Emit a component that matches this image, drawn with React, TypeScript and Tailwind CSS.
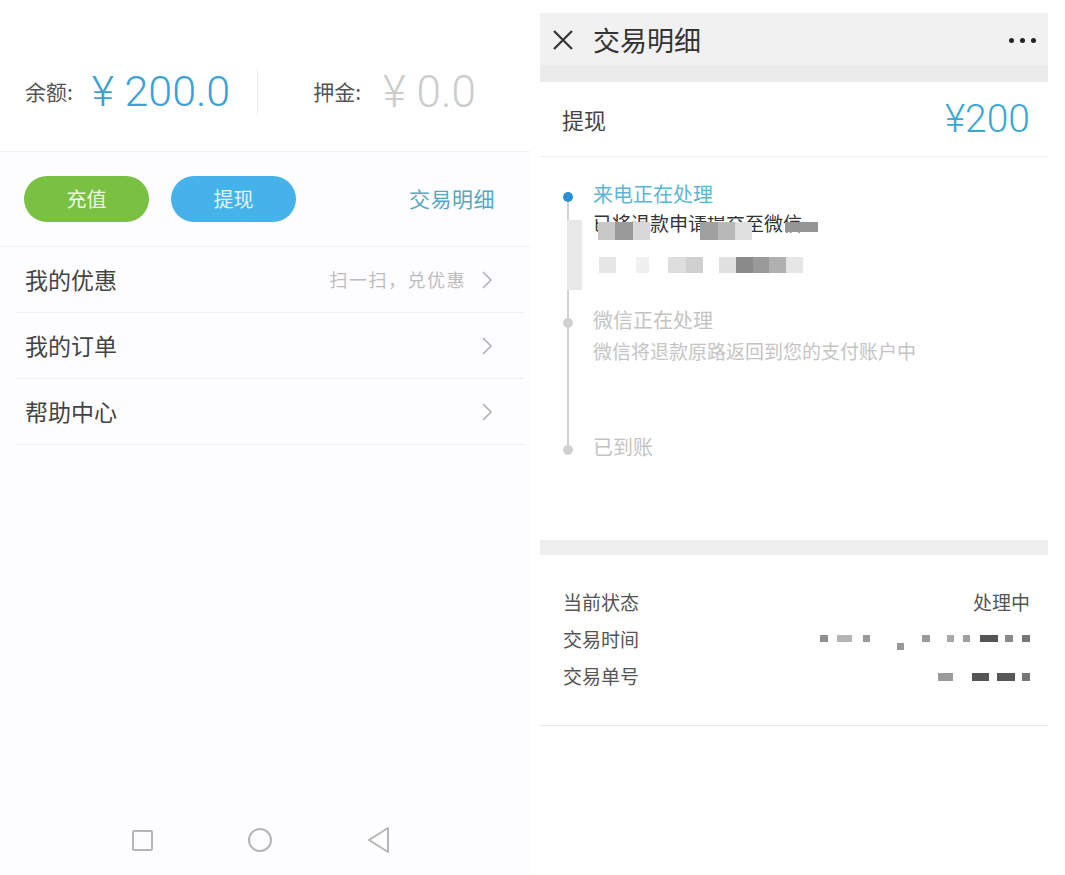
import { ChevronRight } from "lucide-react";

const CJK = "font-['Noto_Sans_CJK_SC',sans-serif]";
const NUM = "font-['Roboto','Noto_Sans_CJK_SC',sans-serif] font-light";

type Block = { x: number; w: number; c: string; y?: number; h?: number };

// mosaic blocks hiding private data, x measured from the start of the strip
const TIME_MOSAIC: Block[] = [
  { x: 0, w: 8, c: "#8f8f8f" },
  { x: 17, w: 15, c: "#b5b5b5" },
  { x: 43, w: 7, c: "#9a9a9a" },
  { x: 77, w: 7, c: "#999", y: 8 },
  { x: 102, w: 8, c: "#9a9a9a" },
  { x: 127, w: 7, c: "#a8a8a8" },
  { x: 143, w: 7, c: "#a0a0a0" },
  { x: 160, w: 18, c: "#555" },
  { x: 185, w: 8, c: "#8a8a8a" },
  { x: 202, w: 8, c: "#777" },
];

const ORDER_MOSAIC: Block[] = [
  { x: 0, w: 15, c: "#9c9c9c" },
  { x: 34, w: 17, c: "#555" },
  { x: 59, w: 18, c: "#585858" },
  { x: 84, w: 8, c: "#777" },
];

const SUB_MOSAIC: Block[] = [
  { x: 0, w: 17, c: "#c8c8c8" },
  { x: 17, w: 18, c: "#9a9a9a" },
  { x: 35, w: 17, c: "#d8d8d8" },
  { x: 102, w: 18, c: "#a0a0a0" },
  { x: 120, w: 17, c: "#b8b8b8" },
  { x: 137, w: 17, c: "#e0e0e0" },
  { x: 187, w: 33, c: "#959595", h: 10 },
];

const BLUR_ROW: Block[] = [
  { x: 0, w: 17, c: "#e6e6e6" },
  { x: 37, w: 13, c: "#f0f0f0" },
  { x: 69, w: 18, c: "#dedede" },
  { x: 87, w: 17, c: "#d0d0d0" },
  { x: 120, w: 17, c: "#e0e0e0" },
  { x: 137, w: 17, c: "#8a8a8a" },
  { x: 154, w: 16, c: "#9a9a9a" },
  { x: 170, w: 17, c: "#b0b0b0" },
  { x: 187, w: 17, c: "#e6e6e6" },
];

function Mosaic({ blocks, width, height }: { blocks: Block[]; width: number; height: number }) {
  return (
    <div className="relative shrink-0" style={{ width, height }}>
      {blocks.map((b, i) => (
        <span
          key={i}
          className="absolute"
          style={{ left: b.x, top: b.y ?? 0, width: b.w, height: b.h ?? height, background: b.c }}
        />
      ))}
    </div>
  );
}

function Chevron() {
  return (
    <svg width="10" height="18" viewBox="0 0 10 18" className="shrink-0">
      <polyline points="1,1 9,9 1,17" fill="none" stroke="#a8a8a8" strokeWidth="1.4" />
    </svg>
  );
}

function MenuRow({ label, hint }: { label: string; hint?: string }) {
  return (
    <div className="flex h-[66px] items-center border-b border-[#f0eff2] pl-[9px] pr-[33px]">
      <span className="text-[23px] text-[#444]">{label}</span>
      {hint && (
        <span className="ml-auto mr-[16px] text-[18px] tracking-[1.5px] text-[#bdbdbd]">{hint}</span>
      )}
      <div className={hint ? "" : "ml-auto"}>
        <Chevron />
      </div>
    </div>
  );
}

function WalletPanel() {
  return (
    <div className="flex h-[875px] w-[530px] shrink-0 flex-col bg-[#fdfcfe]">
      <div className="flex h-[152px] items-center border-b border-[#f3f2f5] bg-white pl-[25px] pt-[32px]">
        <span className="text-[21px] text-[#555]">余额:</span>
        <span className={`${NUM} ml-[19px] text-[43px] leading-none text-[#3ba2d6]`}>¥ 200.0</span>
        <div className="ml-[27px] h-[46px] w-px bg-[#ececec]" />
        <span className="ml-[55px] text-[21px] text-[#555]">押金:</span>
        <span className={`${NUM} ml-[22px] text-[44px] leading-none text-[#cccccc]`}>¥ 0.0</span>
      </div>

      <div className="flex h-[95px] items-center border-b border-[#f1f0f3] pl-[24px] pr-[35px]">
        <button className="flex h-[46px] w-[125px] items-center justify-center rounded-full bg-[#79c043] text-[20px] text-[#eef8e2]">
          充值
        </button>
        <button className="ml-[22px] flex h-[46px] w-[125px] items-center justify-center rounded-full bg-[#45b3ea] text-[20px] text-[#e4f4fc]">
          提现
        </button>
        <span className="ml-auto text-[21px] tracking-[0.5px] text-[#55a8c2]">交易明细</span>
      </div>

      <div className="ml-[16px] mr-[5px]">
        <MenuRow label="我的优惠" hint="扫一扫，兑优惠" />
        <MenuRow label="我的订单" />
        <MenuRow label="帮助中心" />
      </div>

      <div className="mt-auto flex h-[70px] items-center pl-[132px]">
        <div className="h-[21px] w-[21px] rounded-[2px] border-[2px] border-[#b5b5b5]" />
        <div className="ml-[95px] h-[24px] w-[24px] rounded-full border-[2px] border-[#b5b5b5]" />
        <svg width="22" height="26" viewBox="0 0 22 26" className="ml-[96px]">
          <polygon points="20,1 1,13 20,25" fill="none" stroke="#b5b5b5" strokeWidth="2" strokeLinejoin="round" />
        </svg>
      </div>
    </div>
  );
}

function DetailPanel() {
  return (
    <div className="ml-[10px] flex w-[508px] shrink-0 flex-col bg-white">
      <div className="mt-[13px] flex flex-col bg-[#f1f1f1]">
        <div className="flex h-[52px] items-center pl-[12px] pr-[12px] pt-[2px]">
          <svg width="22" height="20" viewBox="0 0 22 20">
            <path d="M2 1 L20 19 M20 1 L2 19" stroke="#333" strokeWidth="2.2" fill="none" />
          </svg>
          <span className="ml-[19px] text-[27px] text-[#333]">交易明细</span>
          <div className="ml-auto flex gap-[6px]">
            <span className="h-[5px] w-[5px] rounded-full bg-[#222]" />
            <span className="h-[5px] w-[5px] rounded-full bg-[#222]" />
            <span className="h-[5px] w-[5px] rounded-full bg-[#222]" />
          </div>
        </div>
        <div className="h-[17px] bg-[#ebebeb]" />
      </div>

      <div className="flex h-[75px] items-center border-b border-[#eeeeee] pl-[22px] pr-[18px]">
        <span className="text-[22px] text-[#444]">提现</span>
        <span className={`${NUM} ml-auto text-[39px] leading-none text-[#3aa8d4]`}>¥200</span>
      </div>

      <div className="relative h-[383px] pl-[53px] pt-[23px]">
        <div className="absolute left-[27px] top-[40px] h-[253px] w-[2px] bg-[#d2d2d2]" />
        <div className="absolute left-[27px] top-[63px] h-[70px] w-[15px] bg-[#e8e8e8]" />
        <div className="absolute left-[23px] top-[35px] h-[10px] w-[10px] rounded-full bg-[#2b8fd6]" />
        <div className="absolute left-[23px] top-[161px] h-[10px] w-[10px] rounded-full bg-[#d0d0d0]" />
        <div className="absolute left-[23px] top-[288px] h-[10px] w-[10px] rounded-full bg-[#d0d0d0]" />

        <div className="text-[20px] leading-[28px] text-[#5ab6d6]">来电正在处理</div>
        <div className="relative mt-[2px] text-[19px] leading-[26px] text-[#333]">
          已将退款申请提交至微信
          <div className="absolute left-[5px] top-[12px]">
            <Mosaic blocks={SUB_MOSAIC} width={230} height={18} />
          </div>
          <div className="absolute left-[104px] top-0 h-[6px] w-[40px] bg-white" />
        </div>
        <div className="mt-[21px] pl-[6px]">
          <Mosaic blocks={BLUR_ROW} width={210} height={16} />
        </div>

        <div className="mt-[33px] text-[20px] leading-[28px] text-[#c4c4c4]">微信正在处理</div>
        <div className="mt-[4px] text-[19px] leading-[26px] text-[#c4c4c4]">微信将退款原路返回到您的支付账户中</div>
        <div className="mt-[69px] text-[20px] leading-[28px] text-[#c4c4c4]">已到账</div>
      </div>

      <div className="h-[15px] bg-[#efefef]" />

      <div className="border-b border-[#e8e8e8] pb-[30px] pl-[23px] pr-[18px] pt-[29px] text-[19px] text-[#555]">
        <div className="flex h-[37px] items-center">
          <span>当前状态</span>
          <span className="ml-auto">处理中</span>
        </div>
        <div className="flex h-[37px] items-center">
          <span>交易时间</span>
          <div className="ml-auto mt-[-2px]">
            <Mosaic blocks={TIME_MOSAIC} width={210} height={7} />
          </div>
        </div>
        <div className="flex h-[37px] items-center">
          <span>交易单号</span>
          <div className="ml-auto">
            <Mosaic blocks={ORDER_MOSAIC} width={92} height={8} />
          </div>
        </div>
      </div>
    </div>
  );
}

export default function App() {
  return (
    <div className={`${CJK} flex h-[875px] w-[1065px] overflow-hidden bg-white`}>
      <WalletPanel />
      <DetailPanel />
    </div>
  );
}
